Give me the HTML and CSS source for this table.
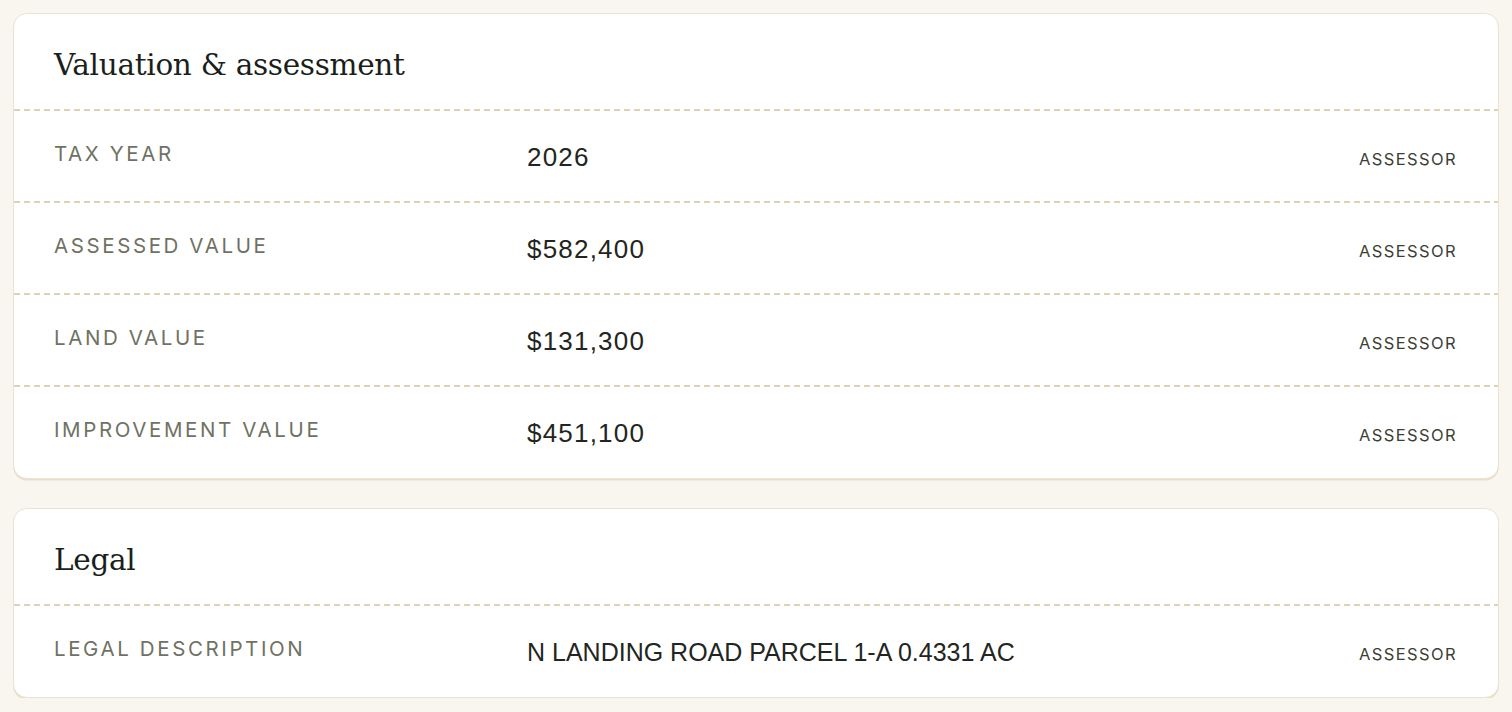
FILE: index.html
```html
<!DOCTYPE html>
<html lang="en">
<head>
<meta charset="utf-8">
<title>Valuation</title>
<link rel="stylesheet" href="styles.css">
</head>
<body>
<div class="page">
  <section class="card">
    <h2 class="card-title">Valuation &amp; assessment</h2>
    <div class="row">
      <div class="label">Tax year</div>
      <div class="value num">2026</div>
      <div class="source">Assessor</div>
    </div>
    <div class="row">
      <div class="label">Assessed value</div>
      <div class="value num">$582,400</div>
      <div class="source">Assessor</div>
    </div>
    <div class="row">
      <div class="label">Land value</div>
      <div class="value num">$131,300</div>
      <div class="source">Assessor</div>
    </div>
    <div class="row">
      <div class="label">Improvement value</div>
      <div class="value num">$451,100</div>
      <div class="source">Assessor</div>
    </div>
  </section>
  <section class="card">
    <h2 class="card-title">Legal</h2>
    <div class="row">
      <div class="label">Legal description</div>
      <div class="value">N LANDING ROAD PARCEL 1-A 0.4331 AC</div>
      <div class="source">Assessor</div>
    </div>
  </section>
</div>
</body>
</html>
```
FILE: styles.css
```css
html, body {
  margin: 0;
  padding: 0;
  background: #f9f6ef;
}
.page {
  padding: 13px 13px 0 13px;
  display: flex;
  flex-direction: column;
  gap: 29px;
}
.card {
  background: #ffffff;
  border: 1.5px solid #ebe3d1;
  border-radius: 14px;
  box-shadow: 0 1.5px 0 #e8dfcb;
  overflow: hidden;
}
.card-title,
.row {
  background-image: repeating-linear-gradient(90deg, #ddd1b6 0 6px, transparent 6px 10px);
  background-position: left bottom;
  background-size: 100% 2px;
  background-repeat: no-repeat;
}
.card-title {
  margin: 0;
  height: 97px;
  box-sizing: border-box;
  padding: 35px 40px 0 40px;
  font-family: "DejaVu Serif", "Liberation Serif", serif;
  font-weight: normal;
  font-size: 29.5px;
  line-height: 1.15;
  letter-spacing: -0.3px;
  color: #1b1f1b;
}
.row {
  display: flex;
  align-items: flex-start;
  height: 92px;
  box-sizing: border-box;
  padding: 0 41px 0 40px;
}
.row:last-child {
  background-image: none;
  height: 91px;
}
.label {
  width: 473px;
  flex: none;
  padding-top: 31px;
  font-family: Inter, "Liberation Sans", sans-serif;
  font-size: 20.5px;
  line-height: 24px;
  text-transform: uppercase;
  letter-spacing: 2.6px;
  color: #6f7262;
}
.value {
  flex: 1;
  padding-top: 31px;
  font-family: "Liberation Sans", Arial, sans-serif;
  font-size: 25px;
  line-height: 30px;
  color: #222520;
}
.num {
  font-size: 26px;
  letter-spacing: 1.2px;
}
.source {
  flex: none;
  padding-top: 38px;
  font-family: Inter, "Liberation Sans", sans-serif;
  font-size: 16.5px;
  line-height: 20px;
  text-transform: uppercase;
  letter-spacing: 1.4px;
  color: #3b4035;
}
```
